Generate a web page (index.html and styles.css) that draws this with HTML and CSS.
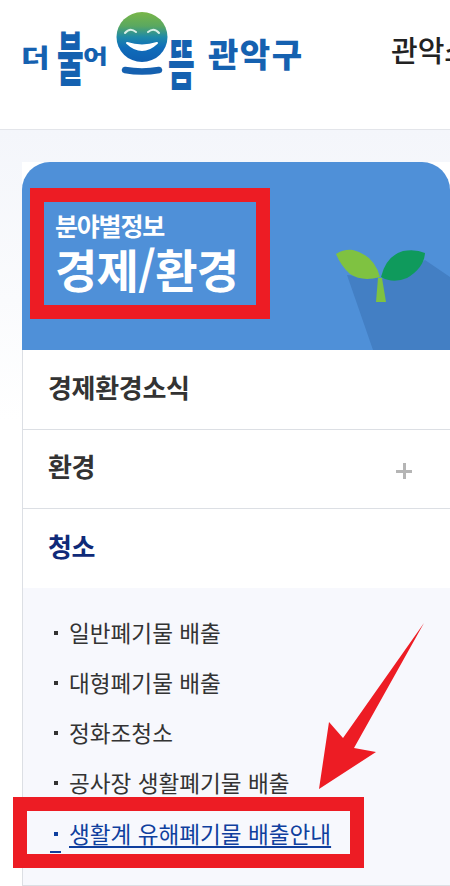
FILE: index.html
```html
<!DOCTYPE html>
<html lang="ko">
  <head>
    <meta charset="UTF-8" />
    <meta name="viewport" content="width=device-width, initial-scale=1.0" />
    <title>경제/환경</title>
    <link rel="stylesheet" href="styles.css">
  </head>

  <body>
    <header class="site-header">
      <a class="logo" href="#">
        <span class="logo-deo">더</span>
        <span class="logo-bul">불</span>
        <span class="logo-eo">어</span>
        <svg class="logo-mark" viewBox="0 0 52 64" width="52" height="64">
          <defs>
            <linearGradient id="face" x1="0" y1="0" x2="0" y2="1">
              <stop offset="0" stop-color="#79b648" />
              <stop offset="0.28" stop-color="#5aa860" />
              <stop offset="0.5" stop-color="#1f8aa8" />
              <stop offset="0.72" stop-color="#0f6cba" />
              <stop offset="1" stop-color="#0f5fb0" />
            </linearGradient>
          </defs>
          <ellipse cx="26" cy="25" rx="25.5" ry="25" fill="url(#face)" />
          <path d="M11 31q15 14 30 0q-15 5-30 0z" fill="#fff" stroke="#fff" stroke-width="2" stroke-linejoin="round" />
          <path d="M9 21q5-6 11-1M32 20q6-5 11 1" fill="none" stroke="#d8f0e8" stroke-width="2" stroke-linecap="round" />
          <path d="M9 58q17 3 34 0" fill="none" stroke="#1561b0" stroke-width="6.5" stroke-linecap="round" />
        </svg>
        <span class="logo-tteum">뜸</span>
        <span class="logo-name">관악구</span>
      </a>
      <nav class="top-title">관악소식</nav>
    </header>

    <main class="content">
      <section class="panel">
        <div class="hero">
          <p class="hero-sub">분야별정보</p>
          <h1 class="hero-title">경제/환경</h1>
          <svg class="sprout" viewBox="330 245 120 105" width="120" height="105">
            <path d="M347 275L373 350H450V277L425 260L400 280z" fill="#437fc4" />
            <path d="M336 254Q344 249 353 250Q374 255 380 277Q362 282 350 274Q341 266 336 254z" fill="#7fc241" />
            <path d="M381 277Q386 256 403 251Q416 249 425 253Q424 268 407 278Q393 284 381 277z" fill="#0f9a5c" />
            <path d="M378 278H382L386 302H376z" fill="#7fc241" />
          </svg>
        </div>

        <ul class="side-menu">
          <li class="menu-item">경제환경소식</li>
          <li class="menu-item">환경<span class="menu-plus"></span></li>
          <li class="menu-item menu-item-active">청소</li>
        </ul>

        <ul class="sub-menu">
          <li class="sub-item"><a href="#">일반폐기물 배출</a></li>
          <li class="sub-item"><a href="#">대형폐기물 배출</a></li>
          <li class="sub-item"><a href="#">정화조청소</a></li>
          <li class="sub-item"><a href="#">공사장 생활폐기물 배출</a></li>
          <li class="sub-item sub-item-current"><a href="#">생활계 유해폐기물 배출안내</a></li>
        </ul>
      </section>
    </main>

    <!-- red marks drawn over the page -->
    <div class="mark mark-hero"></div>
    <div class="mark mark-link"></div>
    <svg class="mark-arrow" viewBox="0 0 450 886" width="450" height="886">
      <path d="M424 623L343 738L329 722L319 789L376 752L354 748z" fill="#ed1c24" />
    </svg>
  </body>
</html>
```

FILE: styles.css
```css
:root {
  box-sizing: border-box;
  --kr: "Noto Sans CJK KR", "Noto Sans", sans-serif;
  --line: #dcdfe4;
  --logo-blue: #1561b0;
}
html,
body {
  margin: 0;
  height: 886px;
  overflow: hidden;
}
body {
  position: relative;
  background: linear-gradient(#f4f6fb 130px, #fafbfd 300px, #fff 420px);
  font-family: var(--kr);
  color: #333;
}
ul {
  list-style: none;
  margin: 0;
  padding: 0;
}

.site-header {
  display: flex;
  height: 130px;
  box-sizing: border-box;
  background: white;
  border-bottom: 1px solid #e3e5ea;
  overflow: hidden;
}
.logo {
  display: flex;
  flex: none;
  align-items: flex-start;
  width: 391px;
  height: 100px;
  padding-left: 21px;
  box-sizing: border-box;
  color: var(--logo-blue);
  font-weight: 900;
  line-height: 1;
  text-decoration: none;
}
.logo span {
  display: block;
}
.logo-deo {
  width: 36px;
  margin-top: 44px;
  font-size: 31px;
  transform-origin: 0 0;
  transform: scaleY(0.8);
}
.logo-bul {
  width: 26px;
  margin-top: 26px;
  font-size: 29px;
  transform-origin: 0 0;
  transform: scaleY(2);
}
.logo-eo {
  width: 33px;
  margin-top: 45px;
  font-size: 27px;
  transform-origin: 0 0;
  transform: scaleY(0.75);
}
.logo-mark {
  flex: none;
  margin: 12px 0 0 0;
}
.logo-tteum {
  width: 40px;
  margin-top: 34px;
  font-size: 29px;
  transform-origin: 0 0;
  transform: scaleY(1.9);
}
.logo-name {
  position: absolute;
  left: 208px;
  margin-top: 37px;
  font-size: 33px;
  letter-spacing: 1.5px;
  white-space: nowrap;
}
.top-title {
  flex: none;
  padding-top: 28px;
  font-size: 29px;
  line-height: 42px;
  font-weight: 500;
  color: #222;
  white-space: nowrap;
}

.content {
  padding: 32px 0 0 22px;
}
.panel {
  background: white;
}
.hero {
  position: relative;
  height: 188px;
  box-sizing: border-box;
  padding: 46px 0 0 33px;
  background: #4f90d8;
  border-radius: 28px 28px 0 0;
  overflow: hidden;
  color: white;
}
.hero-sub {
  margin: 0;
  font-size: 25px;
  line-height: 34px;
  font-weight: 700;
  letter-spacing: -1.2px;
}
.hero-title {
  margin: 0;
  padding-top: 1px;
  font-size: 46px;
  line-height: 50px;
  font-weight: 700;
  letter-spacing: -0.8px;
}
.sprout {
  position: absolute;
  left: 308px;
  top: 83px;
}

.side-menu {
  padding-top: 1px;
  border-left: 1px solid var(--line);
}
.menu-item {
  display: flex;
  justify-content: space-between;
  align-items: center;
  height: 79px;
  box-sizing: border-box;
  padding: 0 38px 7px 25px;
  border-bottom: 1px solid var(--line);
  font-size: 26px;
  font-weight: 700;
  letter-spacing: -0.3px;
}
.menu-item:last-child {
  border-bottom: 0;
}
.menu-item-active {
  color: #0f2a78;
}
.menu-plus {
  width: 16px;
  height: 16px;
  margin-top: 11px;
  background:
    linear-gradient(#b5b5b5, #b5b5b5) center / 16px 3px no-repeat,
    linear-gradient(#b5b5b5, #b5b5b5) center / 3px 16px no-repeat;
}

.sub-menu {
  height: 298px;
  box-sizing: border-box;
  padding-top: 20px;
  background: #f7f8fd;
  border-left: 1px solid var(--line);
  border-bottom: 1px solid var(--line);
}
.sub-item {
  height: 50px;
  font-size: 22.6px;
  line-height: 50px;
}
.sub-item a {
  display: inline-block;
  position: relative;
  padding-left: 46px;
  color: #333;
  text-decoration: none;
}
.sub-item a::before {
  content: "";
  position: absolute;
  left: 31px;
  top: 23px;
  width: 4px;
  height: 4px;
  background: #333;
}
.sub-item-current {
  padding-top: 1px;
}
.sub-item-current a {
  color: #0f3f9e;
  text-decoration: underline;
  text-decoration-thickness: 2px;
  text-underline-offset: 3px;
}
.sub-item-current a::before {
  background: #0f3f9e;
}
.sub-item-current a::after {
  content: "";
  position: absolute;
  left: 27px;
  top: 42px;
  width: 11px;
  height: 2px;
  background: #0f3f9e;
}

.mark {
  position: absolute;
  box-sizing: border-box;
  border: 14px solid #ed1c24;
}
.mark-hero {
  left: 30px;
  top: 188px;
  width: 240px;
  height: 131px;
}
.mark-link {
  left: 13px;
  top: 797px;
  width: 351px;
  height: 71px;
}
.mark-arrow {
  position: absolute;
  left: 0;
  top: 0;
}
```
